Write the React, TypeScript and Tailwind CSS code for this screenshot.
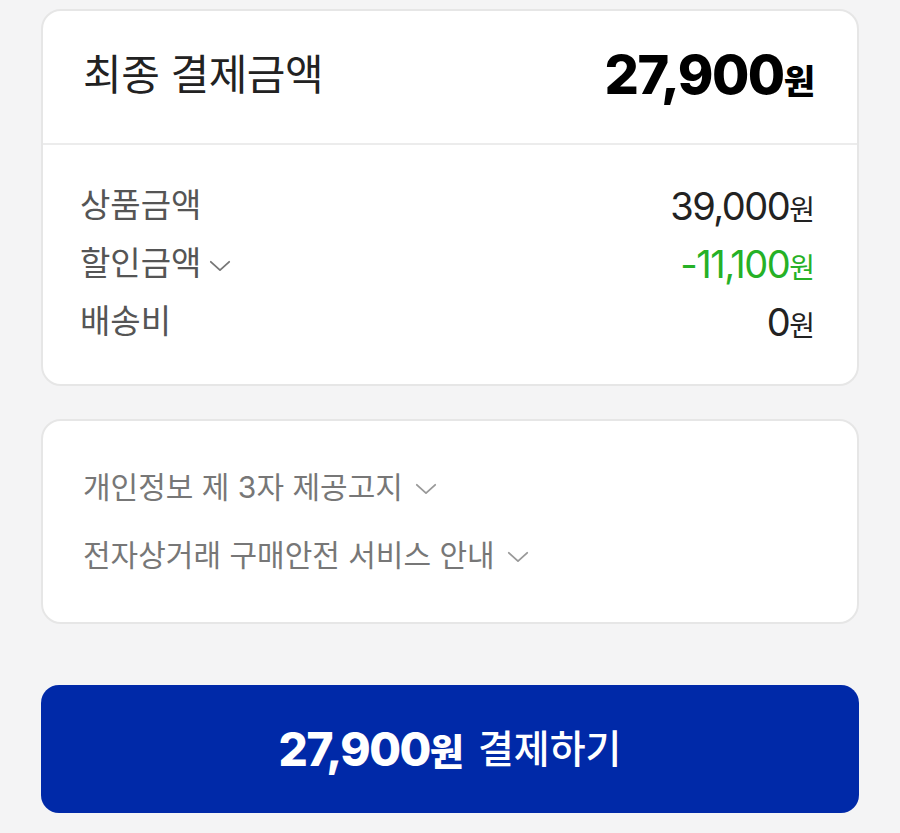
const FONT = 'font-["Inter","Noto_Sans_CJK_KR",sans-serif]';

function Chevron({ className }: { className?: string }) {
  return (
    <svg viewBox="0 0 24 13" preserveAspectRatio="none" className={className} fill="none" stroke="currentColor" strokeWidth="2" strokeLinecap="round" strokeLinejoin="round">
      <polyline points="2,2 12,11 22,2" />
    </svg>
  );
}

const rows = [
  { label: '상품금액', value: '39,000', color: 'text-[#222]', chevron: false },
  { label: '할인금액', value: '-11,100', color: 'text-[#26b126]', chevron: true },
  { label: '배송비', value: '0', color: 'text-[#222]', chevron: false },
];

const notices = ['개인정보 제 3자 제공고지', '전자상거래 구매안전 서비스 안내'];

export default function App() {
  return (
    <div className={`${FONT} min-h-[833px] w-full bg-[#f4f4f5] px-[41px] pt-[9px]`}>
      {/* summary */}
      <div className="rounded-[20px] border-2 border-[#e6e6e6] bg-white">
        <div className="flex h-[134px] items-center justify-between border-b-2 border-[#ececec] pb-[6px] pl-[40px] pr-[42px]">
          <span className="text-[42px] tracking-[-0.5px] text-[#222]">최종 결제금액</span>
          <span className="flex items-baseline font-extrabold text-black">
            <span className="text-[54px] tracking-[-1.5px]">27,900</span>
            <span className="text-[34px]">원</span>
          </span>
        </div>
        <div className="pt-[32px] pb-[33px] pl-[37px] pr-[42px]">
          {rows.map((r) => (
            <div key={r.label} className="flex h-[58px] items-center justify-between">
              <span className="flex items-center gap-[8px] text-[33px] text-[#555]">
                {r.label}
                {r.chevron && <Chevron className="mt-[4px] h-[12px] w-[22px] text-[#777]" />}
              </span>
              <span className={`flex items-baseline ${r.color}`}>
                <span className="text-[38px] tracking-[-1.5px]">{r.value}</span>
                <span className="text-[28px]">원</span>
              </span>
            </div>
          ))}
        </div>
      </div>

      {/* notices */}
      <div className="mt-[33px] rounded-[20px] border-2 border-[#e6e6e6] bg-white pt-[32px] pb-[33px] pl-[40px]">
        {notices.map((n) => (
          <div key={n} className="flex h-[68px] items-center gap-[12px] text-[30px] text-[#777]">
            {n}
            <Chevron className="mt-[4px] h-[12px] w-[22px] text-[#999]" />
          </div>
        ))}
      </div>

      {/* pay */}
      <button className="mt-[61px] flex h-[128px] w-full items-center justify-center rounded-[18px] bg-[#0029a8] text-white">
        <span className="flex items-baseline">
          <span className="text-[46px] font-extrabold tracking-[-1.5px]">27,900</span>
          <span className="text-[37px] font-extrabold">원</span>
        </span>
        <span className="ml-[14px] text-[39px] font-medium">결제하기</span>
      </button>
    </div>
  );
}
